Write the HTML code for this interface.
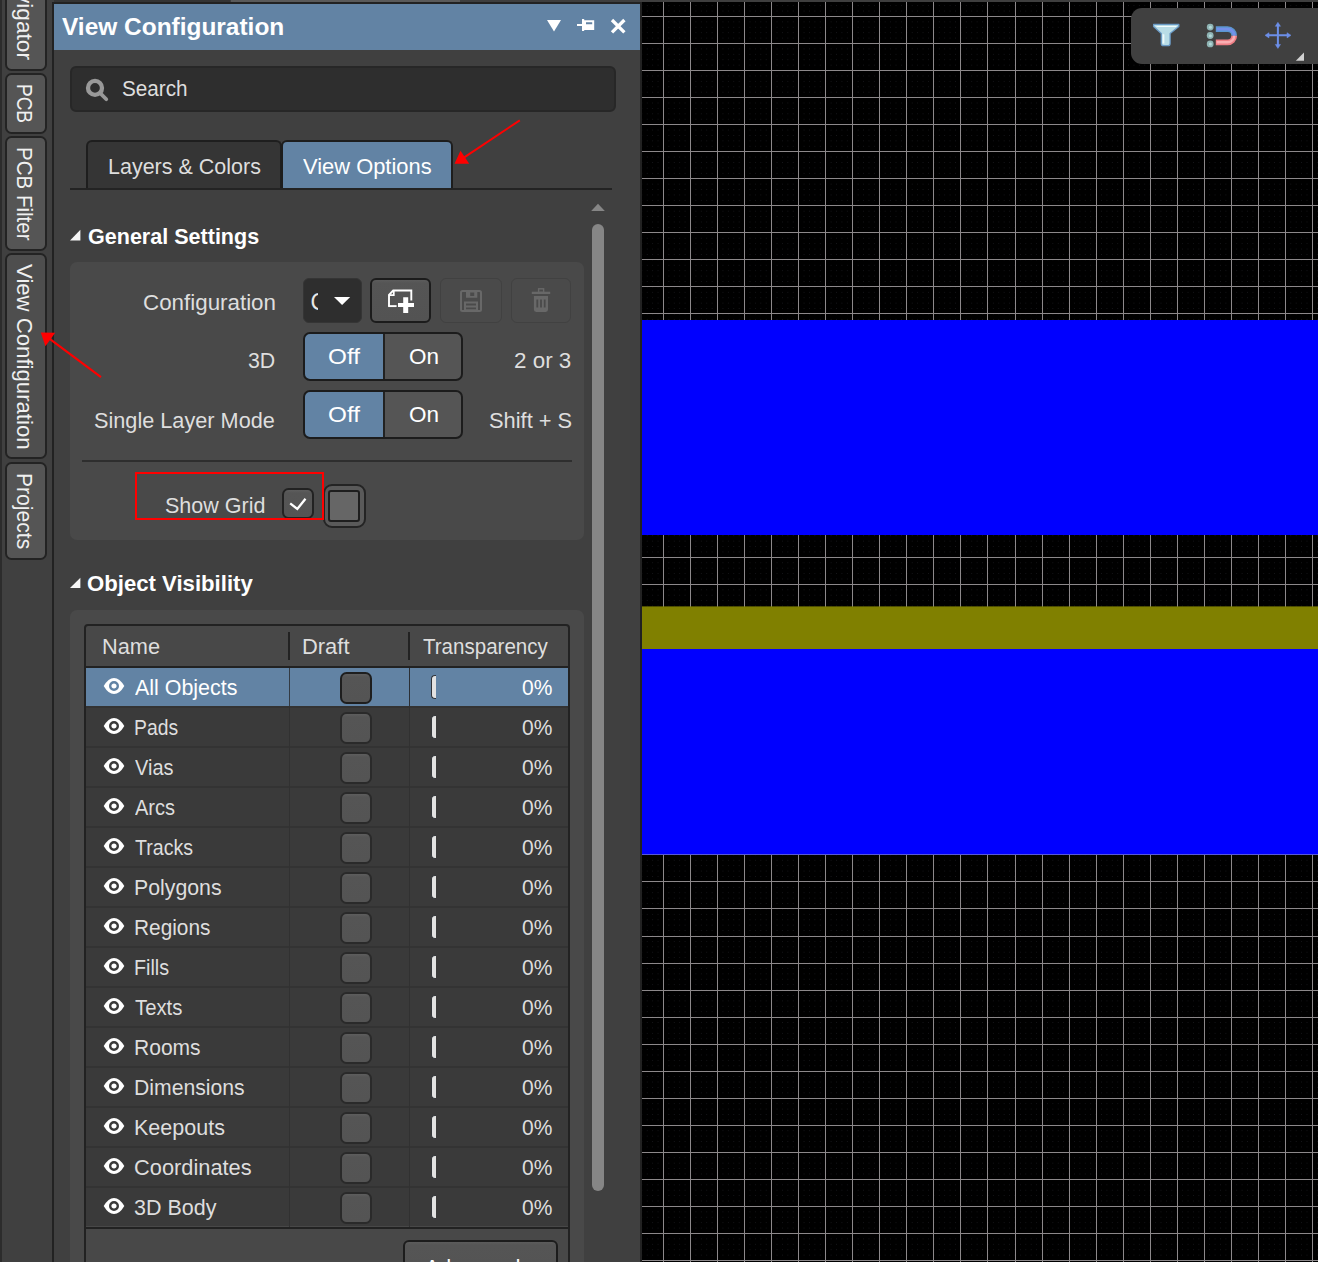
<!DOCTYPE html><html><head><meta charset="utf-8"><title>View Configuration</title><style>
*{box-sizing:border-box;margin:0;padding:0}
html,body{width:1318px;height:1262px;overflow:hidden;background:#404040;font-family:"Liberation Sans",sans-serif}
.a{position:absolute}
.t{position:absolute;white-space:pre;line-height:1;transform-origin:0 0;font-family:"Liberation Sans",sans-serif;font-weight:400}
.t.b{font-weight:700}
.t.v{color:#f0f0f0}
.vt{position:absolute;left:5px;width:42px;background:#555555;border:2px solid #232323;border-radius:6.5px}
.btn{position:absolute;border:2px solid #1c1c1c;border-radius:6px;background:linear-gradient(#5c5c5c 0,#555 3px,#535353 100%)}
.dbtn{position:absolute;border:1.5px solid #414141;border-radius:6px;background:#4a4a4a}
.cb{position:absolute;width:31.6px;height:31.6px;border:2px solid #222;border-radius:6.5px;background:linear-gradient(#5e5e5e 0,#555 3px,#545454 100%)}
.row{position:absolute;left:86px;width:482px;height:40px;background:#3a3a3a;border-top:2px solid #333}
.hd{position:absolute;background:#e2e2e2;border:1.4px solid #30343a;border-right:0;border-radius:4px 0 0 4px;width:5.6px;height:24px}
</style></head><body>
<div class="a" style="left:642px;top:2px;width:676px;height:1260px;background:#000;overflow:hidden">
<svg class="a" style="left:0;top:0" width="676" height="1260" viewBox="642 2 676 1260" shape-rendering="crispEdges"><defs><pattern id="dots" x="663.0" y="16.0" width="5.408" height="5.409" patternUnits="userSpaceOnUse"><rect x="0" y="0" width="1" height="1" fill="#17171b"/></pattern></defs><rect x="642" y="2" width="676" height="1260" fill="url(#dots)" shape-rendering="auto"/><rect x="663" y="2" width="1" height="1260" fill="#8c888a"/><rect x="690" y="2" width="1" height="1260" fill="#8c888a"/><rect x="717" y="2" width="1" height="1260" fill="#8c888a"/><rect x="744" y="2" width="1" height="1260" fill="#8c888a"/><rect x="771" y="2" width="1" height="1260" fill="#8c888a"/><rect x="798" y="2" width="1" height="1260" fill="#8c888a"/><rect x="825" y="2" width="1" height="1260" fill="#8c888a"/><rect x="852" y="2" width="1" height="1260" fill="#8c888a"/><rect x="879" y="2" width="1" height="1260" fill="#8c888a"/><rect x="906" y="2" width="1" height="1260" fill="#8c888a"/><rect x="933" y="2" width="1" height="1260" fill="#8c888a"/><rect x="960" y="2" width="1" height="1260" fill="#8c888a"/><rect x="987" y="2" width="1" height="1260" fill="#8c888a"/><rect x="1015" y="2" width="1" height="1260" fill="#8c888a"/><rect x="1042" y="2" width="1" height="1260" fill="#8c888a"/><rect x="1069" y="2" width="1" height="1260" fill="#8c888a"/><rect x="1096" y="2" width="1" height="1260" fill="#8c888a"/><rect x="1123" y="2" width="1" height="1260" fill="#8c888a"/><rect x="1150" y="2" width="1" height="1260" fill="#8c888a"/><rect x="1177" y="2" width="1" height="1260" fill="#8c888a"/><rect x="1204" y="2" width="1" height="1260" fill="#8c888a"/><rect x="1231" y="2" width="1" height="1260" fill="#8c888a"/><rect x="1258" y="2" width="1" height="1260" fill="#8c888a"/><rect x="1285" y="2" width="1" height="1260" fill="#8c888a"/><rect x="1312" y="2" width="1" height="1260" fill="#8c888a"/><rect x="642" y="16" width="676" height="1" fill="#8c888a"/><rect x="642" y="43" width="676" height="1" fill="#8c888a"/><rect x="642" y="70" width="676" height="1" fill="#8c888a"/><rect x="642" y="97" width="676" height="1" fill="#8c888a"/><rect x="642" y="124" width="676" height="1" fill="#8c888a"/><rect x="642" y="151" width="676" height="1" fill="#8c888a"/><rect x="642" y="178" width="676" height="1" fill="#8c888a"/><rect x="642" y="205" width="676" height="1" fill="#8c888a"/><rect x="642" y="232" width="676" height="1" fill="#8c888a"/><rect x="642" y="259" width="676" height="1" fill="#8c888a"/><rect x="642" y="286" width="676" height="1" fill="#8c888a"/><rect x="642" y="313" width="676" height="1" fill="#8c888a"/><rect x="642" y="341" width="676" height="1" fill="#8c888a"/><rect x="642" y="368" width="676" height="1" fill="#8c888a"/><rect x="642" y="395" width="676" height="1" fill="#8c888a"/><rect x="642" y="422" width="676" height="1" fill="#8c888a"/><rect x="642" y="449" width="676" height="1" fill="#8c888a"/><rect x="642" y="476" width="676" height="1" fill="#8c888a"/><rect x="642" y="503" width="676" height="1" fill="#8c888a"/><rect x="642" y="530" width="676" height="1" fill="#8c888a"/><rect x="642" y="557" width="676" height="1" fill="#8c888a"/><rect x="642" y="584" width="676" height="1" fill="#8c888a"/><rect x="642" y="611" width="676" height="1" fill="#8c888a"/><rect x="642" y="638" width="676" height="1" fill="#8c888a"/><rect x="642" y="665" width="676" height="1" fill="#8c888a"/><rect x="642" y="692" width="676" height="1" fill="#8c888a"/><rect x="642" y="719" width="676" height="1" fill="#8c888a"/><rect x="642" y="746" width="676" height="1" fill="#8c888a"/><rect x="642" y="773" width="676" height="1" fill="#8c888a"/><rect x="642" y="800" width="676" height="1" fill="#8c888a"/><rect x="642" y="827" width="676" height="1" fill="#8c888a"/><rect x="642" y="854" width="676" height="1" fill="#8c888a"/><rect x="642" y="881" width="676" height="1" fill="#8c888a"/><rect x="642" y="908" width="676" height="1" fill="#8c888a"/><rect x="642" y="936" width="676" height="1" fill="#8c888a"/><rect x="642" y="963" width="676" height="1" fill="#8c888a"/><rect x="642" y="990" width="676" height="1" fill="#8c888a"/><rect x="642" y="1017" width="676" height="1" fill="#8c888a"/><rect x="642" y="1044" width="676" height="1" fill="#8c888a"/><rect x="642" y="1071" width="676" height="1" fill="#8c888a"/><rect x="642" y="1098" width="676" height="1" fill="#8c888a"/><rect x="642" y="1125" width="676" height="1" fill="#8c888a"/><rect x="642" y="1152" width="676" height="1" fill="#8c888a"/><rect x="642" y="1179" width="676" height="1" fill="#8c888a"/><rect x="642" y="1206" width="676" height="1" fill="#8c888a"/><rect x="642" y="1233" width="676" height="1" fill="#8c888a"/><rect x="642" y="1260" width="676" height="1" fill="#8c888a"/><rect x="642" y="320" width="676" height="215" fill="#0000ff"/><rect x="642" y="606.4" width="676" height="42.6" fill="#808000" shape-rendering="geometricPrecision"/><rect x="642" y="649" width="676" height="206" fill="#0000ff"/><rect x="642" y="854" width="676" height="1" fill="#5858d8"/></svg>
</div>
<div class="a" style="left:0;top:0;width:1318px;height:2px;background:#3e3e3e"></div>
<div class="a" style="left:0;top:0;width:230px;height:2px;background:#343434"></div>
<div class="a" style="left:231px;top:0;width:229px;height:2px;background:#5a5a5a"></div>
<div class="a" style="left:54px;top:2px;width:588px;height:2px;background:#222"></div>
<div class="a" style="left:1131px;top:8px;width:200px;height:56px;background:#404040;border-radius:11px"></div>
<svg class="a" style="left:1131px;top:8px" width="187" height="56" viewBox="1131 8 187 56">
<path d="M1153.6 24.4H1178.8V26.6L1170.1 33.6V43.4Q1170.1 45.7 1167.8 45.7H1163.6Q1161.3 45.7 1161.3 43.4V33.6L1153.6 26.6Z" fill="#b9dde6" stroke="#6b9bc6" stroke-width="1.3" stroke-linejoin="round"/>
<path d="M1155.6 25.9H1177L1176 26.9H1157.4Z" fill="#f2fbfd"/>
<path d="M1162.6 34V43.6H1164.4V34.6Z" fill="#eef9fb"/>
<g fill="#8fb4b4"><circle cx="1210.2" cy="27.1" r="3.4"/><circle cx="1210.2" cy="35.5" r="3.4"/><circle cx="1210.2" cy="43.9" r="3.4"/></g>
<g fill="#b4dada"><circle cx="1210.4" cy="27.3" r="1.5"/><circle cx="1210.4" cy="35.7" r="1.5"/><circle cx="1210.4" cy="44.1" r="1.5"/></g>
<path d="M1215.8 29.1H1227.6A6.6 6.6 0 0 1 1234.2 35.7" fill="none" stroke="#5b96cf" stroke-width="5.8"/>
<path d="M1234.2 35.7A6.6 6.6 0 0 1 1227.6 42.3H1215.8" fill="none" stroke="#ee7f86" stroke-width="5.8"/>
<path d="M1216.6 29.1H1227.6A6.6 6.6 0 0 1 1234.2 35.7" fill="none" stroke="#7490ea" stroke-width="2.8"/>
<path d="M1234.2 35.7A6.6 6.6 0 0 1 1227.6 42.3H1216.6" fill="none" stroke="#f9aeb2" stroke-width="2.4"/>
<g stroke="#6c8fe8" stroke-width="2" fill="#6c8fe8"><path d="M1267.5 35.3H1288.5M1277.9 24.8V45.8" fill="none"/><path d="M1265 35.3L1269 32.7V37.9ZM1291 35.3L1287 32.7V37.9ZM1277.9 22.3L1275.3 26.3H1280.5ZM1277.9 48.4L1275.3 44.4H1280.5Z" stroke-width="0.5"/></g>
<path d="M1295.8 60.8H1304V52.6Z" fill="#d2d2d2"/>
</svg>
<div class="a" style="left:0;top:0;width:54px;height:1262px;background:#404040"></div>
<div class="a" style="left:0;top:0;width:2px;height:1262px;background:#2c2c2c"></div>
<div class="a" style="left:52px;top:2px;width:2px;height:1260px;background:#222"></div>
<div class="vt" style="top:-20.0px;height:90.6px;background:#555"></div>
<div class="vt" style="top:73.0px;height:60.6px;background:#555"></div>
<div class="vt" style="top:136.4px;height:114.2px;background:#555"></div>
<div class="vt" style="top:253.2px;height:206.2px;background:#4e4e4e"></div>
<div class="vt" style="top:462.2px;height:97.6px;background:#555"></div>
<span class="t v" style="left:35.10px;top:-36.62px;font-size:22px;transform:rotate(90deg) scaleX(1.0300)">Navigator</span>
<span class="t v" style="left:35.10px;top:84.24px;font-size:22px;transform:rotate(90deg) scaleX(0.8628)">PCB</span>
<span class="t v" style="left:35.10px;top:147.47px;font-size:22px;transform:rotate(90deg) scaleX(0.9333)">PCB Filter</span>
<span class="t v" style="left:35.10px;top:264.00px;font-size:22px;transform:rotate(90deg) scaleX(1.0071)">View Configuration</span>
<span class="t v" style="left:35.10px;top:473.44px;font-size:22px;transform:rotate(90deg) scaleX(0.9590)">Projects</span>
<div class="a" style="left:54px;top:4px;width:586px;height:1258px;background:#404040"></div>
<div class="a" style="left:640px;top:2px;width:2px;height:1260px;background:#222"></div>
<div class="a" style="left:54px;top:4px;width:586px;height:46px;background:#6283a4"></div>
<svg class="a" style="left:540px;top:14px" width="95" height="24" viewBox="540 14 95 24">
<path d="M547 20H561L554 31.5Z" fill="#fff"/>
<path d="M577 24H583V26H577Z M582 19H584.2V31H582Z" fill="#fff"/>
<path d="M584 20.2H594.2V30H584Z M586 22.2V24.3H592.2V22.2Z" fill="#fff" fill-rule="evenodd"/>
<path d="M612 20L624.4 32.4M624.4 20L612 32.4" stroke="#fff" stroke-width="3.3" fill="none"/>
</svg>
<div class="a" style="left:70px;top:66px;width:545.5px;height:45.6px;background:#2e2e2e;border:2px solid #272727;border-radius:6px"></div>
<svg class="a" style="left:82px;top:75px" width="30" height="30" viewBox="82 75 30 30"><circle cx="95" cy="87.9" r="7" fill="none" stroke="#999" stroke-width="4.3"/><path d="M100.4 93.4L106.3 99.3" stroke="#999" stroke-width="3.7" stroke-linecap="round"/></svg>
<div class="a" style="left:86px;top:140px;width:196px;height:48px;background:#353535;border:2px solid #1e1e1e;border-bottom:0;border-radius:6px 6px 0 0"></div>
<div class="a" style="left:281.4px;top:140px;width:172px;height:48px;background:#6283a4;border:2px solid #1d1d1d;border-bottom:0;border-radius:6px 6px 0 0"></div>
<div class="a" style="left:70px;top:188px;width:542px;height:2px;background:#232323"></div>
<svg class="a" style="left:590px;top:202px" width="16" height="10" viewBox="590 202 16 10"><path d="M591.2 211.1H604.8L598 203.7Z" fill="#868686"/></svg>
<div class="a" style="left:592px;top:223.8px;width:12px;height:966.8px;background:#868686;border-radius:6px"></div>
<svg class="a" style="left:68px;top:226px" width="16" height="18" viewBox="68 226 16 18"><path d="M70 240.4H80.4V229.7Z" fill="#f6f6f6"/></svg>
<svg class="a" style="left:68px;top:574px" width="16" height="18" viewBox="68 574 16 18"><path d="M70 588.1H80.4V577.8Z" fill="#f6f6f6"/></svg>
<div class="a" style="left:70px;top:262px;width:514px;height:277.5px;background:#494949;border-radius:7px"></div>
<div class="a" style="left:303.2px;top:278.2px;width:58.4px;height:45.3px;background:#2e2e2e;border:1.5px solid #353535;border-radius:6px"></div>
<div class="a" style="left:310px;top:285px;width:8.3px;height:32px;overflow:hidden"><span class="t" style="left:0.5px;top:6px;font-size:23px;color:#e8e8e8">C</span></div>
<svg class="a" style="left:332px;top:295px" width="20" height="12" viewBox="332 295 20 12"><path d="M334 297.1H350.2L342.1 305Z" fill="#fff"/></svg>
<div class="btn" style="left:370.3px;top:278.2px;width:61px;height:45.3px"></div>
<svg class="a" style="left:384px;top:286px" width="34" height="30" viewBox="384 286 34 30">
<path d="M389 306.1V294.8L393.2 290.5H411.3V300.5" fill="none" stroke="#fff" stroke-width="1.9"/>
<path d="M388.1 306.1H396.6" fill="none" stroke="#fff" stroke-width="1.9"/>
<path d="M389 295.2H393.8V290.5" fill="none" stroke="#fff" stroke-width="1.7"/>
<path d="M403.2 297.3H408.2V303H414V307H408.2V313H403.2V307H398V303H403.2Z" fill="#fff" stroke="#555" stroke-width="1.2" paint-order="stroke"/>
</svg>
<div class="dbtn" style="left:440.3px;top:278.3px;width:61.3px;height:45.2px"></div>
<div class="dbtn" style="left:510.6px;top:278.3px;width:60.9px;height:45.2px"></div>
<svg class="a" style="left:456px;top:286px" width="30" height="30" viewBox="456 286 30 30">
<rect x="461" y="291" width="20" height="20" rx="1.5" fill="none" stroke="#686868" stroke-width="2"/>
<path d="M466 291H477.3V297.8H466Z M470.2 292.6V296H474.2V292.6Z" fill="#686868" fill-rule="evenodd"/>
<path d="M464 301.6H478V311H464Z M466 303.6V305.4H476V303.6Z M466 307.4V309.2H476V307.4Z" fill="#686868" fill-rule="evenodd"/>
</svg>
<svg class="a" style="left:526px;top:284px" width="30" height="32" viewBox="526 284 30 32">
<rect x="538.6" y="288.8" width="5" height="3.6" fill="none" stroke="#686868" stroke-width="1.4"/>
<rect x="531.8" y="291.7" width="18.4" height="2.3" fill="#686868"/>
<path d="M533.9 296H548V309.6Q548 311.9 545.7 311.9H536.2Q533.9 311.9 533.9 309.6Z M536.4 299.6V307.6H538.2V299.6Z M540.1 299.6V307.6H541.9V299.6Z M543.8 299.6V307.6H545.6V299.6Z" fill="#686868" fill-rule="evenodd"/>
</svg>
<div class="a" style="left:303.2px;top:332.0px;width:159.8px;height:49.3px;border:2px solid #1c1c1c;border-radius:7px;background:linear-gradient(90deg,#6283a4 0,#6283a4 77.8px,#222 77.8px,#222 79.8px,#555 79.8px);overflow:hidden"></div>
<div class="a" style="left:303.2px;top:390.0px;width:159.8px;height:49.3px;border:2px solid #1c1c1c;border-radius:7px;background:linear-gradient(90deg,#6283a4 0,#6283a4 77.8px,#222 77.8px,#222 79.8px,#555 79.8px);overflow:hidden"></div>
<div class="a" style="left:82px;top:460px;width:490px;height:2px;background:#2e2e2e"></div>
<div class="cb" style="left:282.2px;top:487.9px"></div>
<svg class="a" style="left:286px;top:494px" width="24" height="20" viewBox="286 494 24 20"><path d="M290.2 503.4L297.3 509L305.5 498.7" fill="none" stroke="#fff" stroke-width="2.3"/></svg>
<div class="a" style="left:323.2px;top:484.4px;width:42.5px;height:43.2px;border:2px solid #242424;border-radius:9px;background:#5a5a5a"></div>
<div class="a" style="left:328px;top:490px;width:32.2px;height:31.8px;border:2px solid #1e1e1e;border-radius:3px;background:#666"></div>
<div class="a" style="left:134.6px;top:472.4px;width:189px;height:47.4px;border:2.1px solid #ff0000"></div>
<div class="a" style="left:70px;top:609.8px;width:514px;height:660px;background:#494949;border-radius:7px"></div>
<div class="a" style="left:84px;top:624px;width:486px;height:660px;border:2px solid #222;border-radius:4px;background:#484848"></div>
<div class="a" style="left:288.3px;top:632px;width:1.7px;height:28px;background:#222"></div>
<div class="a" style="left:408.3px;top:632px;width:1.7px;height:28px;background:#222"></div>
<div class="row" style="top:666px;background:#6283a4;border-top-color:#6283a4"></div>
<div class="row" style="top:706px"></div>
<div class="row" style="top:746px"></div>
<div class="row" style="top:786px"></div>
<div class="row" style="top:826px"></div>
<div class="row" style="top:866px"></div>
<div class="row" style="top:906px"></div>
<div class="row" style="top:946px"></div>
<div class="row" style="top:986px"></div>
<div class="row" style="top:1026px"></div>
<div class="row" style="top:1066px"></div>
<div class="row" style="top:1106px"></div>
<div class="row" style="top:1146px"></div>
<div class="row" style="top:1186px"></div>
<div class="a" style="left:289px;top:706px;width:1.3px;height:521px;background:#313131"></div>
<div class="a" style="left:409.2px;top:706px;width:1.3px;height:521px;background:#313131"></div>
<div class="a" style="left:289px;top:668px;width:1.2px;height:38px;background:#333b44"></div>
<div class="a" style="left:409.2px;top:668px;width:1.2px;height:38px;background:#2b2f35"></div>
<div class="a" style="left:86px;top:666px;width:482px;height:2px;background:#222"></div>
<div class="a" style="left:86px;top:1227px;width:482px;height:2.4px;background:#222"></div>
<svg class="a" style="left:102px;top:676.0px" width="24" height="20" viewBox="-12 -10 24 20"><path d="M-10.3 0Q-5.6 -8.1 0 -8.1Q5.6 -8.1 10.3 0Q5.6 8.1 0 8.1Q-5.6 8.1 -10.3 0Z" fill="#fff"/><circle r="3.8" fill="none" stroke="#6283a4" stroke-width="2.4"/></svg>
<div class="cb" style="left:340.3px;top:672.0px;border-color:#1e1e1e"></div>
<div class="hd" style="left:430.5px;top:675.0px"></div>
<svg class="a" style="left:102px;top:716.0px" width="24" height="20" viewBox="-12 -10 24 20"><path d="M-10.3 0Q-5.6 -8.1 0 -8.1Q5.6 -8.1 10.3 0Q5.6 8.1 0 8.1Q-5.6 8.1 -10.3 0Z" fill="#fff"/><circle r="3.8" fill="none" stroke="#3a3a3a" stroke-width="2.4"/></svg>
<div class="cb" style="left:340.3px;top:712.0px;border-color:#2a2a2a"></div>
<div class="hd" style="left:430.5px;top:715.0px;border-color:#33363a"></div>
<svg class="a" style="left:102px;top:756.0px" width="24" height="20" viewBox="-12 -10 24 20"><path d="M-10.3 0Q-5.6 -8.1 0 -8.1Q5.6 -8.1 10.3 0Q5.6 8.1 0 8.1Q-5.6 8.1 -10.3 0Z" fill="#fff"/><circle r="3.8" fill="none" stroke="#3a3a3a" stroke-width="2.4"/></svg>
<div class="cb" style="left:340.3px;top:752.0px;border-color:#2a2a2a"></div>
<div class="hd" style="left:430.5px;top:755.0px;border-color:#33363a"></div>
<svg class="a" style="left:102px;top:796.0px" width="24" height="20" viewBox="-12 -10 24 20"><path d="M-10.3 0Q-5.6 -8.1 0 -8.1Q5.6 -8.1 10.3 0Q5.6 8.1 0 8.1Q-5.6 8.1 -10.3 0Z" fill="#fff"/><circle r="3.8" fill="none" stroke="#3a3a3a" stroke-width="2.4"/></svg>
<div class="cb" style="left:340.3px;top:792.0px;border-color:#2a2a2a"></div>
<div class="hd" style="left:430.5px;top:795.0px;border-color:#33363a"></div>
<svg class="a" style="left:102px;top:836.0px" width="24" height="20" viewBox="-12 -10 24 20"><path d="M-10.3 0Q-5.6 -8.1 0 -8.1Q5.6 -8.1 10.3 0Q5.6 8.1 0 8.1Q-5.6 8.1 -10.3 0Z" fill="#fff"/><circle r="3.8" fill="none" stroke="#3a3a3a" stroke-width="2.4"/></svg>
<div class="cb" style="left:340.3px;top:832.0px;border-color:#2a2a2a"></div>
<div class="hd" style="left:430.5px;top:835.0px;border-color:#33363a"></div>
<svg class="a" style="left:102px;top:876.0px" width="24" height="20" viewBox="-12 -10 24 20"><path d="M-10.3 0Q-5.6 -8.1 0 -8.1Q5.6 -8.1 10.3 0Q5.6 8.1 0 8.1Q-5.6 8.1 -10.3 0Z" fill="#fff"/><circle r="3.8" fill="none" stroke="#3a3a3a" stroke-width="2.4"/></svg>
<div class="cb" style="left:340.3px;top:872.0px;border-color:#2a2a2a"></div>
<div class="hd" style="left:430.5px;top:875.0px;border-color:#33363a"></div>
<svg class="a" style="left:102px;top:916.0px" width="24" height="20" viewBox="-12 -10 24 20"><path d="M-10.3 0Q-5.6 -8.1 0 -8.1Q5.6 -8.1 10.3 0Q5.6 8.1 0 8.1Q-5.6 8.1 -10.3 0Z" fill="#fff"/><circle r="3.8" fill="none" stroke="#3a3a3a" stroke-width="2.4"/></svg>
<div class="cb" style="left:340.3px;top:912.0px;border-color:#2a2a2a"></div>
<div class="hd" style="left:430.5px;top:915.0px;border-color:#33363a"></div>
<svg class="a" style="left:102px;top:956.0px" width="24" height="20" viewBox="-12 -10 24 20"><path d="M-10.3 0Q-5.6 -8.1 0 -8.1Q5.6 -8.1 10.3 0Q5.6 8.1 0 8.1Q-5.6 8.1 -10.3 0Z" fill="#fff"/><circle r="3.8" fill="none" stroke="#3a3a3a" stroke-width="2.4"/></svg>
<div class="cb" style="left:340.3px;top:952.0px;border-color:#2a2a2a"></div>
<div class="hd" style="left:430.5px;top:955.0px;border-color:#33363a"></div>
<svg class="a" style="left:102px;top:996.0px" width="24" height="20" viewBox="-12 -10 24 20"><path d="M-10.3 0Q-5.6 -8.1 0 -8.1Q5.6 -8.1 10.3 0Q5.6 8.1 0 8.1Q-5.6 8.1 -10.3 0Z" fill="#fff"/><circle r="3.8" fill="none" stroke="#3a3a3a" stroke-width="2.4"/></svg>
<div class="cb" style="left:340.3px;top:992.0px;border-color:#2a2a2a"></div>
<div class="hd" style="left:430.5px;top:995.0px;border-color:#33363a"></div>
<svg class="a" style="left:102px;top:1036.0px" width="24" height="20" viewBox="-12 -10 24 20"><path d="M-10.3 0Q-5.6 -8.1 0 -8.1Q5.6 -8.1 10.3 0Q5.6 8.1 0 8.1Q-5.6 8.1 -10.3 0Z" fill="#fff"/><circle r="3.8" fill="none" stroke="#3a3a3a" stroke-width="2.4"/></svg>
<div class="cb" style="left:340.3px;top:1032.0px;border-color:#2a2a2a"></div>
<div class="hd" style="left:430.5px;top:1035.0px;border-color:#33363a"></div>
<svg class="a" style="left:102px;top:1076.0px" width="24" height="20" viewBox="-12 -10 24 20"><path d="M-10.3 0Q-5.6 -8.1 0 -8.1Q5.6 -8.1 10.3 0Q5.6 8.1 0 8.1Q-5.6 8.1 -10.3 0Z" fill="#fff"/><circle r="3.8" fill="none" stroke="#3a3a3a" stroke-width="2.4"/></svg>
<div class="cb" style="left:340.3px;top:1072.0px;border-color:#2a2a2a"></div>
<div class="hd" style="left:430.5px;top:1075.0px;border-color:#33363a"></div>
<svg class="a" style="left:102px;top:1116.0px" width="24" height="20" viewBox="-12 -10 24 20"><path d="M-10.3 0Q-5.6 -8.1 0 -8.1Q5.6 -8.1 10.3 0Q5.6 8.1 0 8.1Q-5.6 8.1 -10.3 0Z" fill="#fff"/><circle r="3.8" fill="none" stroke="#3a3a3a" stroke-width="2.4"/></svg>
<div class="cb" style="left:340.3px;top:1112.0px;border-color:#2a2a2a"></div>
<div class="hd" style="left:430.5px;top:1115.0px;border-color:#33363a"></div>
<svg class="a" style="left:102px;top:1156.0px" width="24" height="20" viewBox="-12 -10 24 20"><path d="M-10.3 0Q-5.6 -8.1 0 -8.1Q5.6 -8.1 10.3 0Q5.6 8.1 0 8.1Q-5.6 8.1 -10.3 0Z" fill="#fff"/><circle r="3.8" fill="none" stroke="#3a3a3a" stroke-width="2.4"/></svg>
<div class="cb" style="left:340.3px;top:1152.0px;border-color:#2a2a2a"></div>
<div class="hd" style="left:430.5px;top:1155.0px;border-color:#33363a"></div>
<svg class="a" style="left:102px;top:1196.0px" width="24" height="20" viewBox="-12 -10 24 20"><path d="M-10.3 0Q-5.6 -8.1 0 -8.1Q5.6 -8.1 10.3 0Q5.6 8.1 0 8.1Q-5.6 8.1 -10.3 0Z" fill="#fff"/><circle r="3.8" fill="none" stroke="#3a3a3a" stroke-width="2.4"/></svg>
<div class="cb" style="left:340.3px;top:1192.0px;border-color:#2a2a2a"></div>
<div class="hd" style="left:430.5px;top:1195.0px;border-color:#33363a"></div>
<div class="btn" style="left:403.2px;top:1240px;width:154.6px;height:46px"></div>
<span class="t b" style="left:62.30px;top:15.00px;font-size:24.0px;color:#ffffff;transform:scaleX(1.0184)">View Configuration</span>
<span class="t" style="left:121.66px;top:78.00px;font-size:22.0px;color:#dedede;transform:scaleX(0.9412)">Search</span>
<span class="t" style="left:107.92px;top:156.00px;font-size:22.0px;color:#dedede;transform:scaleX(0.9768)">Layers &amp; Colors</span>
<span class="t" style="left:303.30px;top:156.00px;font-size:22.0px;color:#ffffff;transform:scaleX(0.9953)">View Options</span>
<span class="t b" style="left:87.70px;top:227.00px;font-size:21.5px;color:#ffffff;transform:scaleX(1.0018)">General Settings</span>
<span class="t" style="left:142.78px;top:292.00px;font-size:22.0px;color:#dedede;transform:scaleX(1.0163)">Configuration</span>
<span class="t" style="left:247.73px;top:350.00px;font-size:22.0px;color:#dedede;transform:scaleX(0.9704)">3D</span>
<span class="t" style="left:328.40px;top:346.00px;font-size:22.0px;color:#ffffff;transform:scaleX(1.1036)">Off</span>
<span class="t" style="left:408.58px;top:346.00px;font-size:22.0px;color:#ffffff;transform:scaleX(1.0222)">On</span>
<span class="t" style="left:514.38px;top:350.00px;font-size:22.0px;color:#dedede;transform:scaleX(1.0182)">2 or 3</span>
<span class="t" style="left:93.81px;top:410.00px;font-size:22.0px;color:#dedede;transform:scaleX(0.9857)">Single Layer Mode</span>
<span class="t" style="left:328.40px;top:404.00px;font-size:22.0px;color:#ffffff;transform:scaleX(1.1036)">Off</span>
<span class="t" style="left:408.58px;top:404.00px;font-size:22.0px;color:#ffffff;transform:scaleX(1.0222)">On</span>
<span class="t" style="left:489.31px;top:410.00px;font-size:22.0px;color:#dedede;transform:scaleX(0.9927)">Shift + S</span>
<span class="t" style="left:165.42px;top:495.00px;font-size:22.0px;color:#dedede;transform:scaleX(0.9782)">Show Grid</span>
<span class="t b" style="left:87.17px;top:574.00px;font-size:21.5px;color:#ffffff;transform:scaleX(1.0300)">Object Visibility</span>
<span class="t" style="left:101.81px;top:636.00px;font-size:22.0px;color:#dedede;transform:scaleX(0.9895)">Name</span>
<span class="t" style="left:302.10px;top:636.00px;font-size:22.0px;color:#dedede;transform:scaleX(0.9957)">Draft</span>
<span class="t" style="left:423.20px;top:636.00px;font-size:22.0px;color:#dedede;transform:scaleX(0.9336)">Transparency</span>
<span class="t" style="left:425.30px;top:1257.00px;font-size:22.0px;color:#ffffff;transform:scaleX(0.9742)">Advanced</span>
<span class="t" style="left:134.60px;top:677.00px;font-size:22.0px;color:#ffffff;transform:scaleX(0.9733)">All Objects</span>
<span class="t" style="left:521.85px;top:677.00px;font-size:22.0px;color:#ffffff;transform:scaleX(0.9533)">0%</span>
<span class="t" style="left:133.72px;top:717.00px;font-size:22.0px;color:#dedede;transform:scaleX(0.8796)">Pads</span>
<span class="t" style="left:521.85px;top:717.00px;font-size:22.0px;color:#dedede;transform:scaleX(0.9533)">0%</span>
<span class="t" style="left:134.60px;top:757.00px;font-size:22.0px;color:#dedede;transform:scaleX(0.9071)">Vias</span>
<span class="t" style="left:521.85px;top:757.00px;font-size:22.0px;color:#dedede;transform:scaleX(0.9533)">0%</span>
<span class="t" style="left:134.60px;top:797.00px;font-size:22.0px;color:#dedede;transform:scaleX(0.9114)">Arcs</span>
<span class="t" style="left:521.85px;top:797.00px;font-size:22.0px;color:#dedede;transform:scaleX(0.9533)">0%</span>
<span class="t" style="left:134.60px;top:837.00px;font-size:22.0px;color:#dedede;transform:scaleX(0.8908)">Tracks</span>
<span class="t" style="left:521.85px;top:837.00px;font-size:22.0px;color:#dedede;transform:scaleX(0.9533)">0%</span>
<span class="t" style="left:133.63px;top:877.00px;font-size:22.0px;color:#dedede;transform:scaleX(0.9674)">Polygons</span>
<span class="t" style="left:521.85px;top:877.00px;font-size:22.0px;color:#dedede;transform:scaleX(0.9533)">0%</span>
<span class="t" style="left:133.65px;top:917.00px;font-size:22.0px;color:#dedede;transform:scaleX(0.9468)">Regions</span>
<span class="t" style="left:521.85px;top:917.00px;font-size:22.0px;color:#dedede;transform:scaleX(0.9533)">0%</span>
<span class="t" style="left:133.70px;top:957.00px;font-size:22.0px;color:#dedede;transform:scaleX(0.8974)">Fills</span>
<span class="t" style="left:521.85px;top:957.00px;font-size:22.0px;color:#dedede;transform:scaleX(0.9533)">0%</span>
<span class="t" style="left:134.60px;top:997.00px;font-size:22.0px;color:#dedede;transform:scaleX(0.9235)">Texts</span>
<span class="t" style="left:521.85px;top:997.00px;font-size:22.0px;color:#dedede;transform:scaleX(0.9533)">0%</span>
<span class="t" style="left:133.64px;top:1037.00px;font-size:22.0px;color:#dedede;transform:scaleX(0.9559)">Rooms</span>
<span class="t" style="left:521.85px;top:1037.00px;font-size:22.0px;color:#dedede;transform:scaleX(0.9533)">0%</span>
<span class="t" style="left:133.64px;top:1077.00px;font-size:22.0px;color:#dedede;transform:scaleX(0.9632)">Dimensions</span>
<span class="t" style="left:521.85px;top:1077.00px;font-size:22.0px;color:#dedede;transform:scaleX(0.9533)">0%</span>
<span class="t" style="left:133.62px;top:1117.00px;font-size:22.0px;color:#dedede;transform:scaleX(0.9783)">Keepouts</span>
<span class="t" style="left:521.85px;top:1117.00px;font-size:22.0px;color:#dedede;transform:scaleX(0.9533)">0%</span>
<span class="t" style="left:133.61px;top:1157.00px;font-size:22.0px;color:#dedede;transform:scaleX(0.9915)">Coordinates</span>
<span class="t" style="left:521.85px;top:1157.00px;font-size:22.0px;color:#dedede;transform:scaleX(0.9533)">0%</span>
<span class="t" style="left:133.62px;top:1197.00px;font-size:22.0px;color:#dedede;transform:scaleX(0.9774)">3D Body</span>
<span class="t" style="left:521.85px;top:1197.00px;font-size:22.0px;color:#dedede;transform:scaleX(0.9533)">0%</span>
<svg class="a" style="left:0;top:0" width="640" height="400" viewBox="0 0 640 400">
<path d="M519.8 120.3L463.5 157.8" stroke="#ff0000" stroke-width="2" fill="none"/><path d="M454.5 163.8L460.5 150.7L469.2 163.8Z" fill="#ff0000"/>
<path d="M101 377.1L49 338.4" stroke="#ff0000" stroke-width="2.1" fill="none"/><path d="M40.8 332.6L55.2 332.8L45.4 346.2Z" fill="#ff0000"/>
</svg>
</body></html>
